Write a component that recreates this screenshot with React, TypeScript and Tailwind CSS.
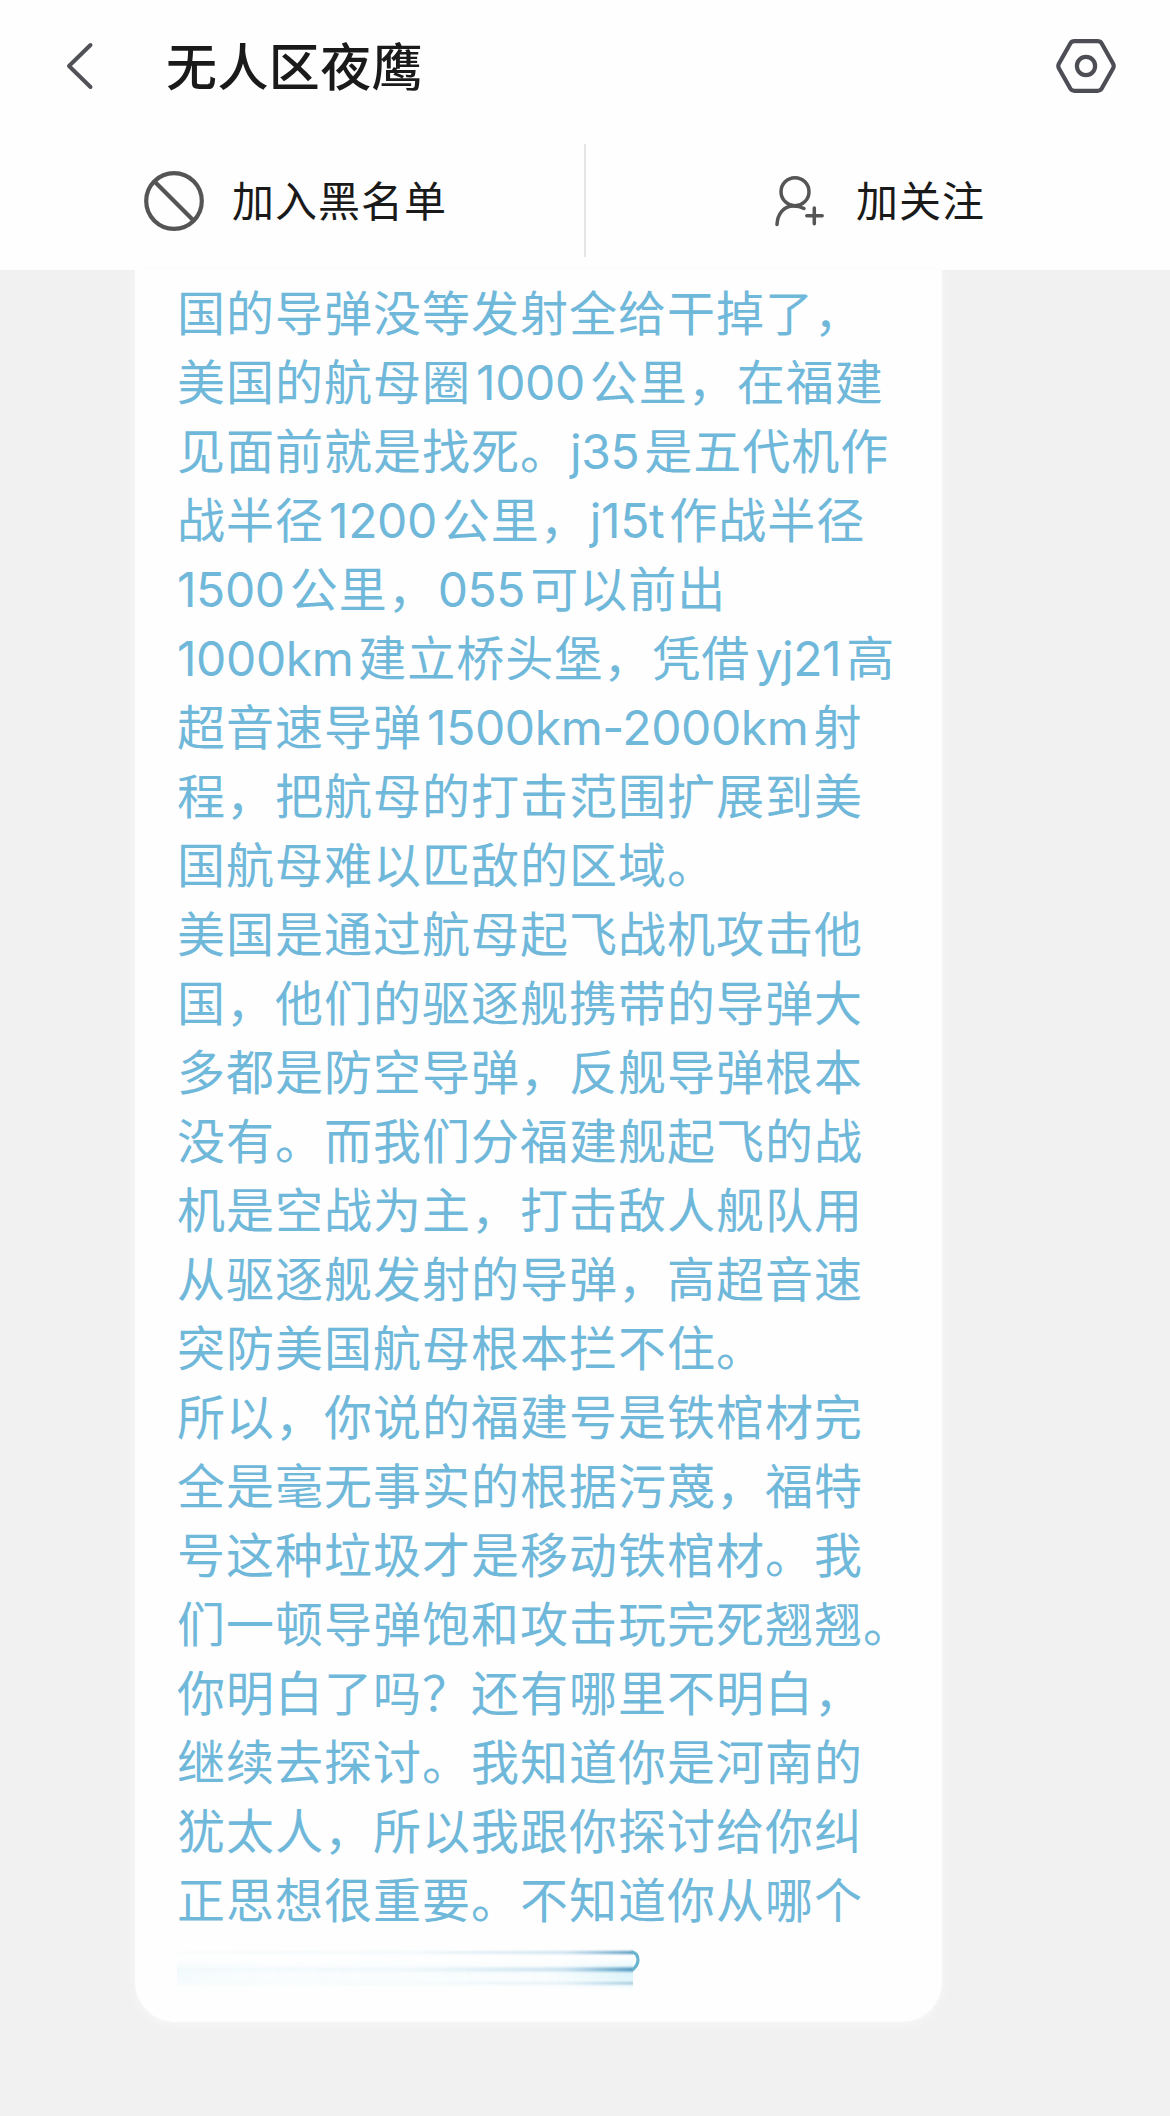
const MESSAGE_LINES = [
  '国的导弹没等发射全给干掉了，',
  '美国的航母圈1000公里，在福建',
  '见面前就是找死。j35是五代机作',
  '战半径1200公里，j15t作战半径',
  '1500公里，055可以前出',
  '1000km建立桥头堡，凭借yj21高',
  '超音速导弹1500km-2000km射',
  '程，把航母的打击范围扩展到美',
  '国航母难以匹敌的区域。',
  '美国是通过航母起飞战机攻击他',
  '国，他们的驱逐舰携带的导弹大',
  '多都是防空导弹，反舰导弹根本',
  '没有。而我们分福建舰起飞的战',
  '机是空战为主，打击敌人舰队用',
  '从驱逐舰发射的导弹，高超音速',
  '突防美国航母根本拦不住。',
  '所以，你说的福建号是铁棺材完',
  '全是毫无事实的根据污蔑，福特',
  '号这种垃圾才是移动铁棺材。我',
  '们一顿导弹饱和攻击玩完死翘翘。',
  '你明白了吗？还有哪里不明白，',
  '继续去探讨。我知道你是河南的',
  '犹太人，所以我跟你探讨给你纠',
  '正思想很重要。不知道你从哪个',
];

function MessageLine({ text }: { text: string }) {
  // latin runs get a thin gap where they touch Chinese characters, not punctuation
  const parts = text.split(/([A-Za-z0-9-]+)/).filter(Boolean);

  return (
    <p className="h-[69px] whitespace-nowrap">
      {parts.map((part, i) => {
        if (!/^[A-Za-z0-9-]/.test(part)) return <span key={i}>{part}</span>;
        const tight = i > 0 && /[，。]$/.test(parts[i - 1]);
        return (
          <span
            key={i}
            className={`${tight ? 'ml-px' : 'ml-[5px]'} mr-[5px] font-['Inter','Noto_Sans_CJK_SC',sans-serif] leading-none tracking-[-0.4px] first:ml-0`}
          >
            {part}
          </span>
        );
      })}
    </p>
  );
}

function BackIcon() {
  return (
    <svg width="28" height="50" viewBox="0 0 28 50" fill="none" stroke="#515158" strokeWidth="4" strokeLinecap="round" strokeLinejoin="round">
      <path d="M24.5 4 3 25l21.5 21" />
    </svg>
  );
}

function SettingsIcon() {
  return (
    <svg width="60" height="56" viewBox="0 0 60 56" fill="none" stroke="#4d4d55" strokeWidth="4.2" strokeLinejoin="round">
      <path d="M18.5 3.2h23q2.800 0 4.200 2.300l11.300 20q1.400 2.500 0 5l-11.300 20q-1.400 2.300-4.200 2.300h-23q-2.800 0-4.200-2.300l-11.300-20q-1.400-2.500 0-5l11.300-20q1.400-2.300 4.200-2.300z" />
      <circle cx="30" cy="28" r="9.1" />
    </svg>
  );
}

function BlockIcon() {
  return (
    <svg width="60" height="60" viewBox="0 0 60 60" fill="none" stroke="#555" strokeWidth="4.2">
      <circle cx="30" cy="30" r="27.8" />
      <path d="M10.5 10.5l39 39" />
    </svg>
  );
}

function FollowIcon() {
  return (
    <svg width="50" height="52" viewBox="0 0 50 52" fill="none" stroke="#555" strokeWidth="3.5" strokeLinecap="round">
      <circle cx="20" cy="16.7" r="14" />
      <path d="M2 49.5C2.500 39 8.500 31 18.500 31q6 0 10.500 2.500" />
      <path d="M31.8 40.7h15.400M39.300 33v15.800" />
    </svg>
  );
}

// last line is wiped out, only a smeared trail is left
function SmearedLine() {
  return (
    <svg className="block" width="480" height="66" viewBox="0 0 480 66" fill="none">
      <defs>
        <linearGradient id="trail" x1="0" x2="1" y1="0" y2="0">
          <stop offset="0" stopColor="#a8d8e8" stopOpacity="0.06" />
          <stop offset="0.5" stopColor="#7fbbdb" stopOpacity="0.08" />
          <stop offset="0.85" stopColor="#72aed2" stopOpacity="0.35" />
          <stop offset="1" stopColor="#4f94bd" />
        </linearGradient>
        <linearGradient id="haze" x1="0" x2="1" y1="0" y2="0">
          <stop offset="0" stopColor="#d5f2f8" stopOpacity="0.25" />
          <stop offset="0.2" stopColor="#e6f8fb" stopOpacity="0.15" />
          <stop offset="0.8" stopColor="#e6f8fb" stopOpacity="0.2" />
          <stop offset="1" stopColor="#c5edf7" stopOpacity="0.6" />
        </linearGradient>
        <filter id="soft" x="0" y="-100%" width="100%" height="300%">
          <feGaussianBlur stdDeviation="0 1.2" />
        </filter>
        <filter id="softer" x="0" y="-50%" width="100%" height="200%">
          <feGaussianBlur stdDeviation="0 4" />
        </filter>
      </defs>
      <rect x="0" y="32" width="456" height="20" fill="url(#haze)" filter="url(#softer)" />
      <rect x="0" y="19" width="456" height="3" fill="url(#trail)" filter="url(#soft)" />
      <rect x="0" y="35.500" width="456" height="4" fill="url(#trail)" filter="url(#soft)" />
      <rect x="0" y="50" width="456" height="2.500" fill="url(#trail)" opacity="0.5" filter="url(#soft)" />
      <path d="M454.5 20q6.500 1 6.500 8 0 5-5.500 10" stroke="#68b5d0" strokeWidth="3.2" />
    </svg>
  );
}

export default function App() {
  return (
    <div className="flex h-[2116px] w-[1170px] flex-col overflow-hidden bg-[#f1f1f1] font-['Noto_Sans_CJK_SC',sans-serif] text-[#1a1a1a]">
      <header className="flex h-[270px] flex-col bg-[#fefefe]">
        <div className="flex h-[132px] items-center pr-[54px] pl-[66px]">
          <button aria-label="Back">
            <BackIcon />
          </button>
          <h1 className="ml-[72px] flex-1 pb-[3px] text-[51px] leading-none font-medium tracking-[0.4px]">无人区夜鹰</h1>
          <button aria-label="Settings">
            <SettingsIcon />
          </button>
        </div>

        <div className="flex h-[138px]">
          <button className="flex w-[584px] items-center pl-[144px]">
            <BlockIcon />
            <span className="ml-7 pb-[5px] text-[42px] leading-none tracking-[1px]">加入黑名单</span>
          </button>
          <div className="mt-3 h-[113px] w-[2px] bg-[#e4e4e4]" />
          <button className="flex w-[584px] items-center pl-[189px]">
            <FollowIcon />
            <span className="ml-[31px] pb-[5px] text-[42px] leading-none tracking-[1px]">加关注</span>
          </button>
        </div>
      </header>

      <main className="pl-[135px]">
        <div className="h-[1752px] w-[807px] rounded-b-[40px] bg-[#fefefe] pt-[6px] pl-[42px] shadow-[0_2px_8px_#f8f8fa]">
          <div className="text-[48px] leading-[69px] tracking-[1px] text-[#70b8da]">
            {MESSAGE_LINES.map((line) => (
              <MessageLine key={line} text={line} />
            ))}
          </div>
          <SmearedLine />
        </div>
      </main>
    </div>
  );
}
